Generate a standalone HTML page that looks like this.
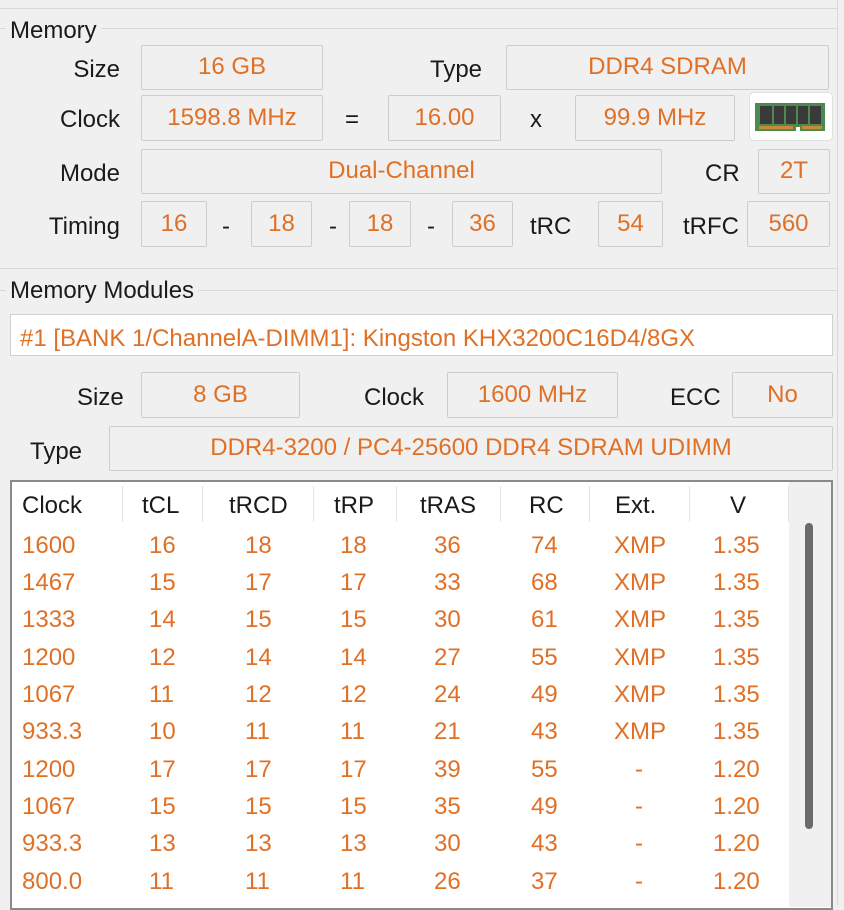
<!DOCTYPE html>
<html><head><meta charset="utf-8"><style>
*{margin:0;padding:0;box-sizing:border-box}
body{width:844px;height:905px;background:#f0f0f0;font-family:"Liberation Sans",sans-serif;font-size:24px;color:#1a1a1a;position:relative;overflow:hidden}
.a,.l,.r{transform:translateY(3px)}
.a{position:absolute;white-space:nowrap}
.b{position:absolute;border:1px solid #cdcdcd;border-radius:2px;color:#e07025;text-align:center;display:flex;align-items:center;justify-content:center;padding-bottom:1px}
.l{position:absolute;white-space:nowrap;text-align:right}
.o{color:#e07025}
.gl{position:absolute;border-top:1px solid #d8d8d8}
.sep{position:absolute;top:486px;height:36px;border-left:1px solid #e4e4e4}
.r{position:absolute;color:#e07025;white-space:nowrap}
</style></head><body>
<div class="gl" style="left:0;top:8px;width:838px"></div>
<div style="position:absolute;left:837px;top:0;height:905px;border-left:1px solid #d8d8d8"></div>
<div class="gl" style="left:0;top:28px;width:838px"></div>
<div class="a" style="left:6px;top:14px;background:#f0f0f0;padding:0 4px">Memory</div>

<div class="l" style="left:30px;top:53px;width:90px">Size</div>
<div class="b" style="left:141px;top:45px;width:182px;height:45px">16 GB</div>
<div class="a" style="left:430px;top:53px">Type</div>
<div class="b" style="left:506px;top:45px;width:323px;height:45px">DDR4 SDRAM</div>

<div class="l" style="left:30px;top:103px;width:90px">Clock</div>
<div class="b" style="left:141px;top:95px;width:182px;height:46px">1598.8 MHz</div>
<div class="a" style="left:345px;top:103px">=</div>
<div class="b" style="left:388px;top:95px;width:113px;height:46px">16.00</div>
<div class="a" style="left:530px;top:103px">x</div>
<div class="b" style="left:575px;top:95px;width:160px;height:46px">99.9 MHz</div>
<div style="position:absolute;left:749px;top:92px;width:84px;height:49px;background:#fff;border:1px solid #e0e0e0;border-radius:5px">
<svg width="84" height="49" viewBox="0 0 84 49" style="position:absolute;left:-1px;top:-1px">
<path d="M6 11H76V39H51V35H47V39H6Z" fill="#4e8a50"/>
<rect x="11" y="14" width="12" height="18" fill="#3a3a3a"/><rect x="25" y="14" width="10" height="18" fill="#3a3a3a"/><rect x="37" y="14" width="10" height="18" fill="#3a3a3a"/><rect x="49" y="14" width="10" height="18" fill="#3a3a3a"/><rect x="61" y="14" width="11" height="18" fill="#3a3a3a"/>
<rect x="10" y="34" width="34" height="3" fill="#c98a3a"/><rect x="53" y="34" width="20" height="3" fill="#c98a3a"/>
</svg></div>

<div class="l" style="left:30px;top:157px;width:90px">Mode</div>
<div class="b" style="left:141px;top:149px;width:521px;height:45px">Dual-Channel</div>
<div class="a" style="left:705px;top:157px">CR</div>
<div class="b" style="left:758px;top:149px;width:72px;height:45px">2T</div>

<div class="l" style="left:20px;top:210px;width:100px">Timing</div>
<div class="b" style="left:141px;top:201px;width:66px;height:46px">16</div>
<div class="a" style="left:222px;top:210px">-</div>
<div class="b" style="left:251px;top:201px;width:61px;height:46px">18</div>
<div class="a" style="left:329px;top:210px">-</div>
<div class="b" style="left:349px;top:201px;width:62px;height:46px">18</div>
<div class="a" style="left:427px;top:210px">-</div>
<div class="b" style="left:452px;top:201px;width:61px;height:46px">36</div>
<div class="a" style="left:530px;top:210px">tRC</div>
<div class="b" style="left:598px;top:201px;width:65px;height:46px">54</div>
<div class="a" style="left:683px;top:210px">tRFC</div>
<div class="b" style="left:747px;top:201px;width:83px;height:46px">560</div>

<div class="gl" style="left:0;top:268px;width:838px"></div>
<div class="gl" style="left:0;top:290px;width:838px"></div>
<div class="a" style="left:6px;top:274px;background:#f0f0f0;padding:0 4px">Memory Modules</div>

<div style="position:absolute;left:10px;top:314px;width:823px;height:42px;background:#fff;border:1px solid #d0d0d0"></div>
<div class="a o" style="left:20px;top:322px">#1 [BANK 1/ChannelA-DIMM1]: Kingston KHX3200C16D4/8GX</div>

<div class="a" style="left:77px;top:381px">Size</div>
<div class="b" style="left:141px;top:372px;width:159px;height:46px">8 GB</div>
<div class="a" style="left:364px;top:381px">Clock</div>
<div class="b" style="left:447px;top:372px;width:171px;height:46px">1600 MHz</div>
<div class="a" style="left:670px;top:381px">ECC</div>
<div class="b" style="left:732px;top:372px;width:101px;height:46px">No</div>

<div class="a" style="left:30px;top:435px">Type</div>
<div class="b" style="left:109px;top:426px;width:724px;height:45px">DDR4-3200 / PC4-25600 DDR4 SDRAM UDIMM</div>

<div style="position:absolute;left:10px;top:480px;width:823px;height:430px;background:#fff;border:2px solid #8a8a8a"></div>
<div style="position:absolute;left:789px;top:482px;width:42px;height:425px;background:#f0f0f0"></div>
<div style="position:absolute;left:805px;top:523px;width:8px;height:306px;background:#6b6b6b;border-radius:4px"></div>
<div class="sep" style="left:122px"></div><div class="sep" style="left:202px"></div><div class="sep" style="left:313px"></div><div class="sep" style="left:396px"></div><div class="sep" style="left:500px"></div><div class="sep" style="left:589px"></div><div class="sep" style="left:689px"></div><div class="sep" style="left:788px"></div>
<div class="a" style="left:22px;top:489px">Clock</div>
<div class="a" style="left:142px;top:489px">tCL</div>
<div class="a" style="left:229px;top:489px">tRCD</div>
<div class="a" style="left:334px;top:489px">tRP</div>
<div class="a" style="left:420px;top:489px">tRAS</div>
<div class="a" style="left:529px;top:489px">RC</div>
<div class="a" style="left:615px;top:489px">Ext.</div>
<div class="a" style="left:730px;top:489px">V</div>

<div class="r" style="left:22px;top:529px">1600</div><div class="r" style="left:149px;top:529px">16</div><div class="r" style="left:245px;top:529px">18</div><div class="r" style="left:340px;top:529px">18</div><div class="r" style="left:434px;top:529px">36</div><div class="r" style="left:531px;top:529px">74</div><div class="r" style="left:614px;top:529px">XMP</div><div class="r" style="left:713px;top:529px">1.35</div>
<div class="r" style="left:22px;top:566px">1467</div><div class="r" style="left:149px;top:566px">15</div><div class="r" style="left:245px;top:566px">17</div><div class="r" style="left:340px;top:566px">17</div><div class="r" style="left:434px;top:566px">33</div><div class="r" style="left:531px;top:566px">68</div><div class="r" style="left:614px;top:566px">XMP</div><div class="r" style="left:713px;top:566px">1.35</div>
<div class="r" style="left:22px;top:603px">1333</div><div class="r" style="left:149px;top:603px">14</div><div class="r" style="left:245px;top:603px">15</div><div class="r" style="left:340px;top:603px">15</div><div class="r" style="left:434px;top:603px">30</div><div class="r" style="left:531px;top:603px">61</div><div class="r" style="left:614px;top:603px">XMP</div><div class="r" style="left:713px;top:603px">1.35</div>
<div class="r" style="left:22px;top:641px">1200</div><div class="r" style="left:149px;top:641px">12</div><div class="r" style="left:245px;top:641px">14</div><div class="r" style="left:340px;top:641px">14</div><div class="r" style="left:434px;top:641px">27</div><div class="r" style="left:531px;top:641px">55</div><div class="r" style="left:614px;top:641px">XMP</div><div class="r" style="left:713px;top:641px">1.35</div>
<div class="r" style="left:22px;top:678px">1067</div><div class="r" style="left:149px;top:678px">11</div><div class="r" style="left:245px;top:678px">12</div><div class="r" style="left:340px;top:678px">12</div><div class="r" style="left:434px;top:678px">24</div><div class="r" style="left:531px;top:678px">49</div><div class="r" style="left:614px;top:678px">XMP</div><div class="r" style="left:713px;top:678px">1.35</div>
<div class="r" style="left:22px;top:715px">933.3</div><div class="r" style="left:149px;top:715px">10</div><div class="r" style="left:245px;top:715px">11</div><div class="r" style="left:340px;top:715px">11</div><div class="r" style="left:434px;top:715px">21</div><div class="r" style="left:531px;top:715px">43</div><div class="r" style="left:614px;top:715px">XMP</div><div class="r" style="left:713px;top:715px">1.35</div>
<div class="r" style="left:22px;top:753px">1200</div><div class="r" style="left:149px;top:753px">17</div><div class="r" style="left:245px;top:753px">17</div><div class="r" style="left:340px;top:753px">17</div><div class="r" style="left:434px;top:753px">39</div><div class="r" style="left:531px;top:753px">55</div><div class="r" style="left:635px;top:753px">-</div><div class="r" style="left:713px;top:753px">1.20</div>
<div class="r" style="left:22px;top:790px">1067</div><div class="r" style="left:149px;top:790px">15</div><div class="r" style="left:245px;top:790px">15</div><div class="r" style="left:340px;top:790px">15</div><div class="r" style="left:434px;top:790px">35</div><div class="r" style="left:531px;top:790px">49</div><div class="r" style="left:635px;top:790px">-</div><div class="r" style="left:713px;top:790px">1.20</div>
<div class="r" style="left:22px;top:827px">933.3</div><div class="r" style="left:149px;top:827px">13</div><div class="r" style="left:245px;top:827px">13</div><div class="r" style="left:340px;top:827px">13</div><div class="r" style="left:434px;top:827px">30</div><div class="r" style="left:531px;top:827px">43</div><div class="r" style="left:635px;top:827px">-</div><div class="r" style="left:713px;top:827px">1.20</div>
<div class="r" style="left:22px;top:865px">800.0</div><div class="r" style="left:149px;top:865px">11</div><div class="r" style="left:245px;top:865px">11</div><div class="r" style="left:340px;top:865px">11</div><div class="r" style="left:434px;top:865px">26</div><div class="r" style="left:531px;top:865px">37</div><div class="r" style="left:635px;top:865px">-</div><div class="r" style="left:713px;top:865px">1.20</div>
</body></html>
